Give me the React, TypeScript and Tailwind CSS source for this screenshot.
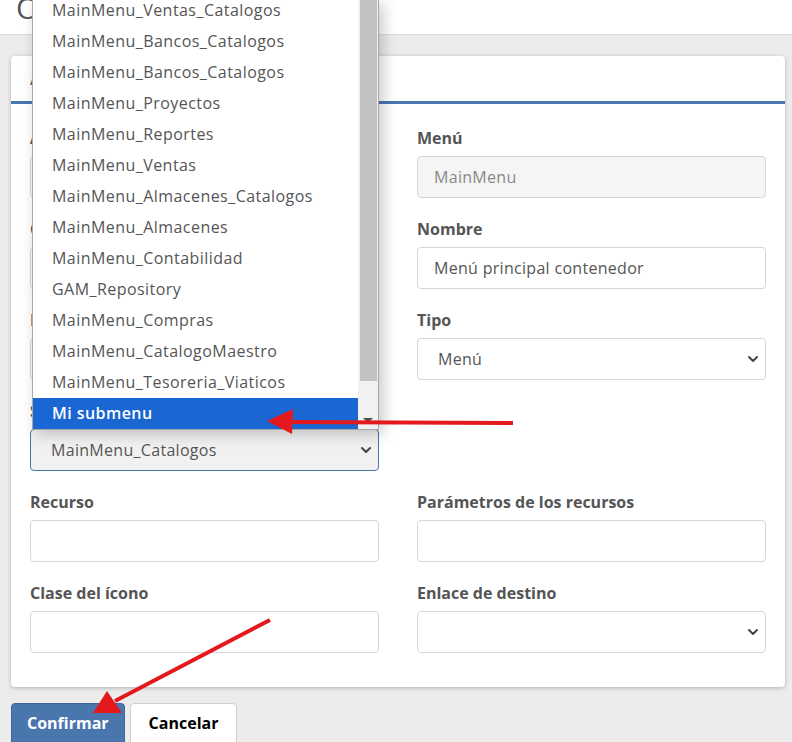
import { ChevronDown } from 'lucide-react';

const font = { fontFamily: '"Open Sans", "Liberation Sans", sans-serif' };

const options = [
    'MainMenu_Ventas_Catalogos',
    'MainMenu_Bancos_Catalogos',
    'MainMenu_Bancos_Catalogos',
    'MainMenu_Proyectos',
    'MainMenu_Reportes',
    'MainMenu_Ventas',
    'MainMenu_Almacenes_Catalogos',
    'MainMenu_Almacenes',
    'MainMenu_Contabilidad',
    'GAM_Repository',
    'MainMenu_Compras',
    'MainMenu_CatalogoMaestro',
    'MainMenu_Tesoreria_Viaticos',
];

const Label = ({ children }: { children?: React.ReactNode }) => (
    <div className="h-5 leading-5 mb-2 text-[16px] font-bold text-[#555]">{children}</div>
);

const Input = ({ value = '', disabled = false }: { value?: string; disabled?: boolean }) => (
    <div
        className={`h-[42px] rounded border border-[#d6d6d6] px-4 flex items-center text-[16px] tracking-[0.3px] ${
            disabled ? 'bg-[#f5f5f5] text-[#888]' : 'bg-white text-[#555]'
        }`}
    >
        {value}
    </div>
);

const Select = ({ value = '', focused = false }: { value?: string; focused?: boolean }) => (
    <div
        className={`h-[42px] rounded border pl-5 pr-[4px] flex items-center justify-between text-[16px] tracking-[0.3px] text-[#555] ${
            focused ? 'border-[#4a76b0] bg-[#f1f1f1]' : 'border-[#d6d6d6] bg-white'
        }`}
    >
        <span>{value}</span>
        <ChevronDown className="w-4 h-4 text-[#444]" strokeWidth={3} />
    </div>
);

const Field = ({ label, children }: { label?: string; children?: React.ReactNode }) => (
    <div className="mb-[21px]">
        <Label>{label}</Label>
        {children}
    </div>
);

export default function App() {
    return (
        <div className="relative w-[792px] h-[742px] overflow-hidden bg-[#ececec]" style={font}>
            <header className="h-[35px] bg-white border-b border-[#dcdcdc] px-4 overflow-hidden">
                <h1 className="-mt-[12px] text-[30px] leading-[40px] text-[#555]">Opciones de menú</h1>
            </header>

            <div className="pl-[11px] pr-[7px] pt-[21px]">
                <div className="bg-white rounded shadow-[0_1px_4px_rgba(0,0,0,0.25)]">
                    <div className="h-[48px] px-[19px] flex items-center border-b-[3px] border-[#4a76b0] text-[18px] text-[#555]">
                        Agregar elemento de menú
                    </div>
                    <div className="px-[19px] pt-[24px] pb-[13px] grid grid-cols-2 gap-x-[38px]">
                        <Field label="Aplicación">
                            <Input value="" />
                        </Field>
                        <Field label="Menú">
                            <Input value="MainMenu" disabled />
                        </Field>
                        <Field label="Código">
                            <Input value="" />
                        </Field>
                        <Field label="Nombre">
                            <Input value="Menú principal contenedor" />
                        </Field>
                        <Field label="Descripción">
                            <Input value="" />
                        </Field>
                        <Field label="Tipo">
                            <Select value="Menú" />
                        </Field>
                        <Field label="Submenú">
                            <Select value="MainMenu_Catalogos" focused />
                        </Field>
                        <div />
                        <Field label="Recurso">
                            <Input />
                        </Field>
                        <Field label="Parámetros de los recursos">
                            <Input />
                        </Field>
                        <Field label="Clase del ícono">
                            <Input />
                        </Field>
                        <Field label="Enlace de destino">
                            <Select />
                        </Field>
                    </div>
                </div>

                <div className="flex gap-[5px] mt-[16px]">
                    <button className="h-[40px] px-[15px] rounded-t bg-[#4a76ae] border border-[#3f689c] text-white font-bold text-[16px]">
                        Confirmar
                    </button>
                    <button className="h-[40px] px-[18px] rounded-t bg-white border border-[#cfcfcf] text-black font-bold text-[16px]">
                        Cancelar
                    </button>
                </div>
            </div>

            {/* open listbox */}
            <div className="absolute left-[32px] top-0 w-[347px] h-[430px] bg-white border border-[#a8a8a8] border-t-0 shadow-[4px_4px_14px_rgba(0,0,0,0.22)] flex">
                <div className="flex-1 flex flex-col justify-end">
                    {options.map((o, i) => (
                        <div key={i} className="h-[31px] leading-[31px] pl-[19px] text-[16px] tracking-[0.45px] text-[#555] whitespace-nowrap">
                            {o}
                        </div>
                    ))}
                    <div className="h-[31px] leading-[31px] pl-[19px] text-[16px] tracking-[0.45px] text-white bg-[#1a66d2] font-semibold">
                        Mi submenu
                    </div>
                </div>
                <div className="w-[20px] bg-[#f1f1f1] flex flex-col items-center pb-[6px]">
                    <div className="w-[17px] h-[381px] bg-[#c1c1c1]" />
                    <div className="flex-1" />
                    <div className="w-0 h-0 border-l-[5px] border-r-[5px] border-t-[5px] border-l-transparent border-r-transparent border-t-[#505050]" />
                </div>
            </div>

            {/* annotation arrows */}
            <svg className="absolute left-0 top-0 pointer-events-none" width="792" height="742">
                <line x1="513" y1="423" x2="288" y2="422" stroke="#e3191e" strokeWidth="4" />
                <polygon points="267,421 293,409 292,434" fill="#e3191e" />
                <line x1="270" y1="620" x2="115" y2="701" stroke="#e3191e" strokeWidth="4" />
                <polygon points="93,713 107,691 122,713" fill="#e3191e" />
            </svg>
        </div>
    );
}
